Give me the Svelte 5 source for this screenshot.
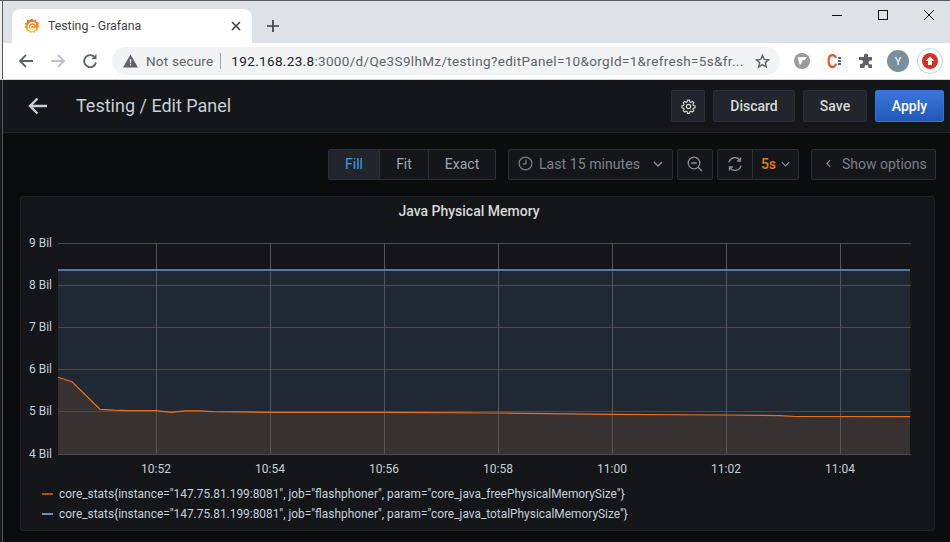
<script lang="ts">
	const yTicks = [
		{ label: '9 Bil', y: 46 },
		{ label: '8 Bil', y: 88 },
		{ label: '7 Bil', y: 130 },
		{ label: '6 Bil', y: 172.5 },
		{ label: '5 Bil', y: 214.5 },
		{ label: '4 Bil', y: 257 },
	];
	const xTicks = [
		{ label: '10:52', x: 156 },
		{ label: '10:54', x: 270 },
		{ label: '10:56', x: 384 },
		{ label: '10:58', x: 498 },
		{ label: '11:00', x: 612 },
		{ label: '11:02', x: 726 },
		{ label: '11:04', x: 840 },
	];
	const free = [
		[58, 180.3], [72, 184.7], [86, 198.5], [100, 212.3], [114, 213.2], [128, 213.6], [156, 213.7], [171, 215.3],
		[185, 213.8], [199, 213.9], [213, 214.6], [270, 215.3], [384, 215.4], [498, 216], [612, 217.3],
		[726, 218], [780, 218.6], [795, 219.5], [910, 219.7],
	];
	const line = free.map((p) => p.join(',')).join(' ');
	const area = `58,257 ${line} 910,257`;
	const legend = [
		{ color: '#b4500f', text: 'core_stats{instance="147.75.81.199:8081", job="flashphoner", param="core_java_freePhysicalMemorySize"}' },
		{ color: '#6f8fc0', text: 'core_stats{instance="147.75.81.199:8081", job="flashphoner", param="core_java_totalPhysicalMemorySize"}' },
	];
</script>

<div class="window">
	<div class="tabstrip">
		<div class="tab">
			<svg class="favicon" viewBox="0 0 16 16" width="16" height="16">
				<defs>
					<linearGradient id="gf" x1="0" y1="1" x2="0" y2="0">
						<stop offset="0" stop-color="#fcc21b" />
						<stop offset="1" stop-color="#ee5a24" />
					</linearGradient>
				</defs>
				<path fill="url(#gf)" d="M8 .6l1.6 1.9 2.3-.8.6 2.300 2.400.6-.8 2.300L15.600 8.600l-1.900 1.500.3 2.400-2.400.3-1 2.200L8.500 13.900 6.400 15 5 13l-2.400.2-.1-2.400L.5 9.500l1.300-2L.8 5.300l2.200-1 .2-2.400 2.400.3z" />
				<path d="M11.800 6.500A4 4 0 1 0 12 10" fill="none" stroke="#fff" stroke-width="1.500" />
				<path d="M10 8.300A1.800 1.800 0 1 0 10 10" fill="none" stroke="#fff" stroke-width="1.100" />
			</svg>
			<span class="tab-title">Testing - Grafana</span>
			<svg class="tab-close" viewBox="0 0 10 10" width="10" height="10"><path d="M1 1l8 8M9 1l-8 8" stroke="#3c4043" stroke-width="1.600" /></svg>
		</div>
		<svg class="newtab" viewBox="0 0 12 12" width="12" height="12"><path d="M6 0v12M0 6h12" stroke="#3c4043" stroke-width="1.700" /></svg>
		<div class="winctl">
			<svg viewBox="0 0 12 12" width="12" height="12"><path d="M1 6.500h10" stroke="#111" stroke-width="1" /></svg>
			<svg viewBox="0 0 12 12" width="12" height="12"><rect x="1.500" y="1.500" width="9" height="9" fill="none" stroke="#111" stroke-width="1" /></svg>
			<svg viewBox="0 0 12 12" width="12" height="12"><path d="M1 1l10 10M11 1L1 11" stroke="#111" stroke-width="1" /></svg>
		</div>
	</div>

	<div class="toolbar">
		<svg class="nav" viewBox="0 0 16 16" width="16" height="16"><path d="M15 8H2M8 2L2 8l6 6" fill="none" stroke="#5f6368" stroke-width="1.800" /></svg>
		<svg class="nav" viewBox="0 0 16 16" width="16" height="16"><path d="M1 8h13M8 2l6 6-6 6" fill="none" stroke="#bdc1c6" stroke-width="1.800" /></svg>
		<svg class="nav" viewBox="0 0 16 16" width="16" height="16"><path d="M13.300 5A6 6 0 1 0 14 9.500" fill="none" stroke="#5f6368" stroke-width="1.900" /><path d="M14.500 1v5.200H9.300z" fill="#5f6368" /></svg>
		<div class="omnibox">
			<svg viewBox="0 0 16 14" width="15" height="14"><path d="M8 0l8 14H0z" fill="#5f6368" /><path d="M7.300 5h1.400v4.500H7.300zM7.300 10.500h1.400v1.400H7.300z" fill="#f1f3f4" /></svg>
			<span class="secure">Not secure</span>
			<span class="sep"></span>
			<span class="url"><span class="host">192.168.23.8</span>:3000/d/Qe3S9lhMz/testing?editPanel=10&amp;orgId=1&amp;refresh=5s&amp;fr...</span>
			<svg class="star" viewBox="0 0 16 16" width="15" height="15"><path d="M8 1.500l1.900 4.300 4.600.4-3.500 3 1.100 4.600L8 11.400l-4.100 2.400L5 9.200l-3.500-3 4.600-.4z" fill="none" stroke="#5f6368" stroke-width="1.500" /></svg>
		</div>
		<div class="exts">
			<span class="ext">
				<svg viewBox="0 0 16 16" width="16" height="16"><circle cx="8" cy="8" r="8" fill="#9a9a9a" /><path d="M3.500 4.300l9.500-.3-2.200 3-2.800.4-.4 2.600-1.800 2.500z" fill="#fff" /></svg>
			</span>
			<span class="ext">
				<span class="c">C</span><span class="dots"><i></i><i></i><i></i></span>
			</span>
			<span class="ext">
				<svg viewBox="0 0 16 16" width="16" height="16"><path d="M6 2.500a2 2 0 0 1 4 0V4h4v3.500h-1.500a2 2 0 0 0 0 4H14V15h-3.500v-1a2 2 0 0 0-4 0v1H2v-4h1a2 2 0 0 0 0-4H1V4h5z" fill="#5f6368" /></svg>
			</span>
			<span class="ext"><span class="avatar">Y</span></span>
			<span class="ext">
				<span class="ring">
					<svg viewBox="0 0 16 16" width="16" height="16"><circle cx="8" cy="8" r="8" fill="#d93025" /><path d="M8 3.500L12.500 8H10v4H6V8H3.500z" fill="#fff" /></svg>
				</span>
			</span>
		</div>
	</div>

	<div class="page">
		<header class="gf-head">
			<svg class="back" viewBox="0 0 20 18" width="20" height="18"><path d="M19 9H2M9.500 1.500L2 9l7.500 7.500" fill="none" stroke="#c7d0d9" stroke-width="2.400" /></svg>
			<h1>Testing / Edit Panel</h1>
			<div class="actions">
				<button class="btn icon-btn" aria-label="settings">
					<svg viewBox="0 0 16 16" width="15" height="15"><path d="M6.800 1h2.400l.4 2 1.300.6 1.800-1.100 1.600 1.700-1.100 1.700.6 1.400 2 .4v2.400l-2 .4-.6 1.300 1.100 1.800-1.700 1.600-1.700-1.100-1.300.6-.4 2H6.800l-.4-2-1.300-.6-1.700 1.100-1.700-1.700 1.100-1.700-.6-1.300-2-.4V7.700l2-.4.6-1.400-1.100-1.700 1.700-1.700 1.700 1.100 1.300-.6z" transform="translate(.8 .3) scale(.9)" fill="none" stroke="#d8d9da" stroke-width="1.300" /><circle cx="8" cy="8" r="2.300" fill="none" stroke="#d8d9da" stroke-width="1.300" /></svg>
				</button>
				<button class="btn discard">Discard</button>
				<button class="btn save">Save</button>
				<button class="btn apply">Apply</button>
			</div>
		</header>

		<div class="controls">
			<div class="group fill-group">
				<button class="seg active">Fill</button>
				<button class="seg">Fit</button>
				<button class="seg">Exact</button>
			</div>
			<button class="ctl range">
				<svg viewBox="0 0 16 16" width="15" height="15"><circle cx="8" cy="8" r="6.800" fill="none" stroke="#7b8087" stroke-width="1.300" /><path d="M8.500 3.800v4.700H5" fill="none" stroke="#7b8087" stroke-width="1.300" /></svg>
				<span>Last 15 minutes</span>
				<svg class="chev" viewBox="0 0 10 6" width="10" height="6"><path d="M1 1l4 4 4-4" fill="none" stroke="#8e9298" stroke-width="1.300" /></svg>
			</button>
			<button class="ctl zoom" aria-label="zoom out">
				<svg viewBox="0 0 16 16" width="16" height="16"><circle cx="7" cy="7" r="5.800" fill="none" stroke="#8e9298" stroke-width="1.300" /><path d="M4.200 7h5.600M11.200 11.200L15 15" fill="none" stroke="#8e9298" stroke-width="1.300" /></svg>
			</button>
			<div class="group refresh">
				<button class="seg sync" aria-label="refresh">
					<svg viewBox="0 0 16 16" width="16" height="16"><path d="M2 6.500A6 6 0 0 1 13 4.500M14 9.500A6 6 0 0 1 3 11.500" fill="none" stroke="#8e9298" stroke-width="1.300" /><path d="M13.500 1.500v3.500H10M2.500 14.500V11H6" fill="none" stroke="#8e9298" stroke-width="1.300" /></svg>
				</button>
				<button class="seg interval">
					<span>5s</span>
					<svg class="chev" viewBox="0 0 10 6" width="9" height="6"><path d="M1 1l4 4 4-4" fill="none" stroke="#8e9298" stroke-width="1.300" /></svg>
				</button>
			</div>
			<button class="ctl options">
				<svg viewBox="0 0 6 10" width="5" height="9"><path d="M5 1L1 5l4 4" fill="none" stroke="#8e9298" stroke-width="1.300" /></svg>
				<span>Show options</span>
			</button>
		</div>

		<section class="panel">
			<h2>Java Physical Memory</h2>
			<svg class="chart" viewBox="0 0 914 255" width="914" height="255">
				<g transform="translate(-20 -28)">
					<rect x="58" y="73" width="852" height="184" fill="#202833" />
					<polygon points={area} fill="#383132" />
					{#each yTicks as t}
						<line x1="58" x2="911" y1={t.y} y2={t.y} stroke="#4a4b4e" shape-rendering="crispEdges" />
						<text class="tick" x="52" y={t.y + 3.500} text-anchor="end">{t.label}</text>
					{/each}
					{#each xTicks as t}
						<line x1={t.x} x2={t.x} y1="46" y2="257" stroke="#54565a" shape-rendering="crispEdges" />
						<text class="tick" x={t.x} y="276" text-anchor="middle">{t.label}</text>
					{/each}
					<line x1="58" x2="910" y1="73" y2="73" stroke="#6f93cf" stroke-width="1.500" />
					<polyline points={line} fill="none" stroke="#e8701f" stroke-width="1.200" />
				</g>
			</svg>
			<ul class="legend">
				{#each legend as item}
					<li>
						<span class="swatch" style:background={item.color}></span>
						<span>{item.text}</span>
					</li>
				{/each}
			</ul>
		</section>
	</div>
</div>

<style>
	:global(body) {
		margin: 0;
		background: #0b0c0e;
	}

	.window {
		width: 950px;
		height: 542px;
		box-sizing: border-box;
		overflow: hidden;
		border-top: 1px solid #55585c;
		font-family: Roboto, sans-serif;
	}

	/* the captured window sits 3px in from the left, with its grey frame line */
	.tabstrip {
		height: 42px;
		box-sizing: border-box;
		padding: 8px 0 0 12px;
		display: flex;
		align-items: flex-end;
		background: linear-gradient(90deg, #eeeeee 2px, #55585c 2px, #55585c 3px, #dee1e6 3px);
	}

	.tab {
		width: 240px;
		height: 34px;
		box-sizing: border-box;
		display: flex;
		align-items: center;
		padding: 0 11px 0 12px;
		background: #fff;
		border-radius: 8px 8px 0 0;
	}

	.tab-title {
		margin-left: 8px;
		flex: 1;
		font: 12.300px Roboto, sans-serif;
		color: #3c4043;
	}

	.newtab {
		margin: 0 0 11px 15px;
	}

	.winctl {
		margin-left: auto;
		align-self: flex-start;
		display: flex;
		gap: 34px;
		padding: 0 15px 0 0;
	}

	.toolbar {
		height: 37px;
		box-sizing: border-box;
		display: flex;
		align-items: center;
		background: linear-gradient(90deg, #eeeeee 2px, #55585c 2px, #55585c 3px, #fff 3px);
		border-bottom: 1px solid #d5d6d8;
		padding-left: 18px;
	}

	.nav {
		margin-right: 16px;
	}

	.omnibox {
		width: 668px;
		height: 28px;
		margin-left: -2px;
		box-sizing: border-box;
		display: flex;
		align-items: center;
		padding: 0 10px 0 11px;
		background: #f1f3f4;
		border-radius: 14px;
	}

	.secure {
		margin-left: 8px;
		font: 13.500px Roboto, sans-serif;
		letter-spacing: 0.2px;
		color: #5f6368;
	}

	.sep {
		width: 1px;
		height: 16px;
		margin: 0 10px 0 7px;
		background: #a4a6a9;
	}

	.url {
		flex: 1;
		font: 13.500px Roboto, sans-serif;
		letter-spacing: 0.34px;
		color: #5f6368;
		white-space: nowrap;
	}

	.host {
		color: #202124;
	}

	.exts {
		display: flex;
		align-items: center;
		margin-left: 6px;
	}

	.ext {
		width: 32px;
		display: flex;
		align-items: center;
		justify-content: center;
		gap: 1px;
	}

	.c {
		width: 10px;
		font: 700 20px "Liberation Sans", sans-serif;
		color: #e8542a;
		transform: scaleX(0.72);
		transform-origin: left center;
	}

	.dots {
		display: flex;
		flex-direction: column;
		gap: 1px;
		flex: none;
	}

	.dots i {
		display: block;
		width: 3px;
		height: 2px;
		background: #2f6db5;
	}

	.avatar {
		width: 22px;
		height: 22px;
		border-radius: 50%;
		background: #78909c;
		color: #fff;
		font: 11px Roboto, sans-serif;
		display: flex;
		align-items: center;
		justify-content: center;
	}

	.ring {
		width: 26px;
		height: 26px;
		border: 1.500px solid #bcd2f3;
		box-sizing: border-box;
		border-radius: 50%;
		display: flex;
		align-items: center;
		justify-content: center;
	}

	.page {
		height: 462px;
		padding-left: 3px;
		background: linear-gradient(90deg, #17181a 2px, #55585c 2px, #55585c 3px, #0b0c0e 3px);
		color: #c7d0d9;
	}

	.gf-head {
		height: 53px;
		box-sizing: border-box;
		display: flex;
		align-items: center;
		padding: 0 6px 0 25px;
		background: #141619;
		border-bottom: 1px solid #22252b;
	}

	h1 {
		margin: -2px 0 0 28px;
		font-size: 18px;
		font-weight: 400;
		color: #c7d0d9;
	}

	.actions {
		margin-left: auto;
		display: flex;
		gap: 8px;
	}

	.btn {
		height: 32px;
		padding: 0;
		border: 1px solid #2c3036;
		border-radius: 2px;
		background: #22252b;
		color: #d8d9da;
		font: 500 14px Roboto, sans-serif;
		display: flex;
		align-items: center;
		justify-content: center;
	}

	.icon-btn {
		width: 34px;
	}

	.discard {
		width: 82px;
	}

	.save {
		width: 64px;
	}

	.apply {
		width: 69px;
		border: 1px solid #3274d9;
		background: linear-gradient(#3a77d8, #2259b8);
		color: #fff;
	}

	.controls {
		display: flex;
		align-items: stretch;
		height: 31px;
		padding: 16px 0 0 325px;
		margin-bottom: 1px;
		color: #8e9298;
	}

	.group {
		display: flex;
		border: 1px solid #2c3036;
		border-radius: 2px;
		background: #141619;
		box-sizing: border-box;
	}

	.seg {
		padding: 0 0 2px;
		border: 0;
		border-right: 1px solid #2c3036;
		background: transparent;
		color: #9fa7b3;
		font: 14px Roboto, sans-serif;
	}

	.seg:last-child {
		border-right: 0;
	}

	.fill-group .seg:nth-child(1) {
		width: 51px;
	}

	.fill-group .seg:nth-child(2) {
		width: 49px;
	}

	.fill-group .seg:nth-child(3) {
		width: 66px;
	}

	.seg.active {
		background: #22252b;
		color: #33a2e5;
	}

	.ctl {
		box-sizing: border-box;
		border: 1px solid #2c3036;
		border-radius: 2px;
		background: #141619;
		color: #7b8087;
		font: 14px Roboto, sans-serif;
		padding: 0 0 2px;
		display: flex;
		align-items: center;
	}

	.range {
		width: 165px;
		margin-left: 12px;
		padding: 0 9px 2px;
		gap: 6px;
		color: #7f848b;
		letter-spacing: 0.07px;
	}

	.range .chev {
		margin-left: auto;
	}

	.zoom {
		width: 36px;
		margin-left: 4px;
		justify-content: center;
	}

	.refresh {
		margin-left: 4px;
	}

	.sync {
		width: 35px;
		display: flex;
		align-items: center;
		justify-content: center;
	}

	.interval {
		width: 45px;
		display: flex;
		align-items: center;
		justify-content: center;
		gap: 5px;
		color: #eb7b18;
		font-weight: 500;
	}

	.options {
		width: 125px;
		margin-left: 12px;
		padding-left: 14px;
		gap: 11px;
		color: #7b8087;
	}

	.panel {
		box-sizing: border-box;
		width: 915px;
		height: 335px;
		margin: 16px 0 0 17px;
		background: #141619;
		border: 1px solid #202226;
		border-radius: 3px;
		display: flex;
		flex-direction: column;
		align-items: stretch;
	}

	h2 {
		margin: 0;
		height: 28px;
		line-height: 29px;
		padding-right: 17px;
		text-align: center;
		font-size: 14px;
		font-weight: 500;
		color: #d8d9da;
	}

	.chart {
		display: block;
		margin-left: -1px;
		flex: none;
	}

	.tick {
		font: 12px Roboto, sans-serif;
		fill: #c7d0d9;
	}

	.legend {
		list-style: none;
		margin: 0;
		padding: 4px 0 0 21px;
		font-size: 11.900px;
		color: #c7d0d9;
	}

	.legend li {
		height: 20px;
		display: flex;
		align-items: center;
	}

	.swatch {
		width: 11px;
		height: 2px;
		margin-right: 6px;
	}
</style>
